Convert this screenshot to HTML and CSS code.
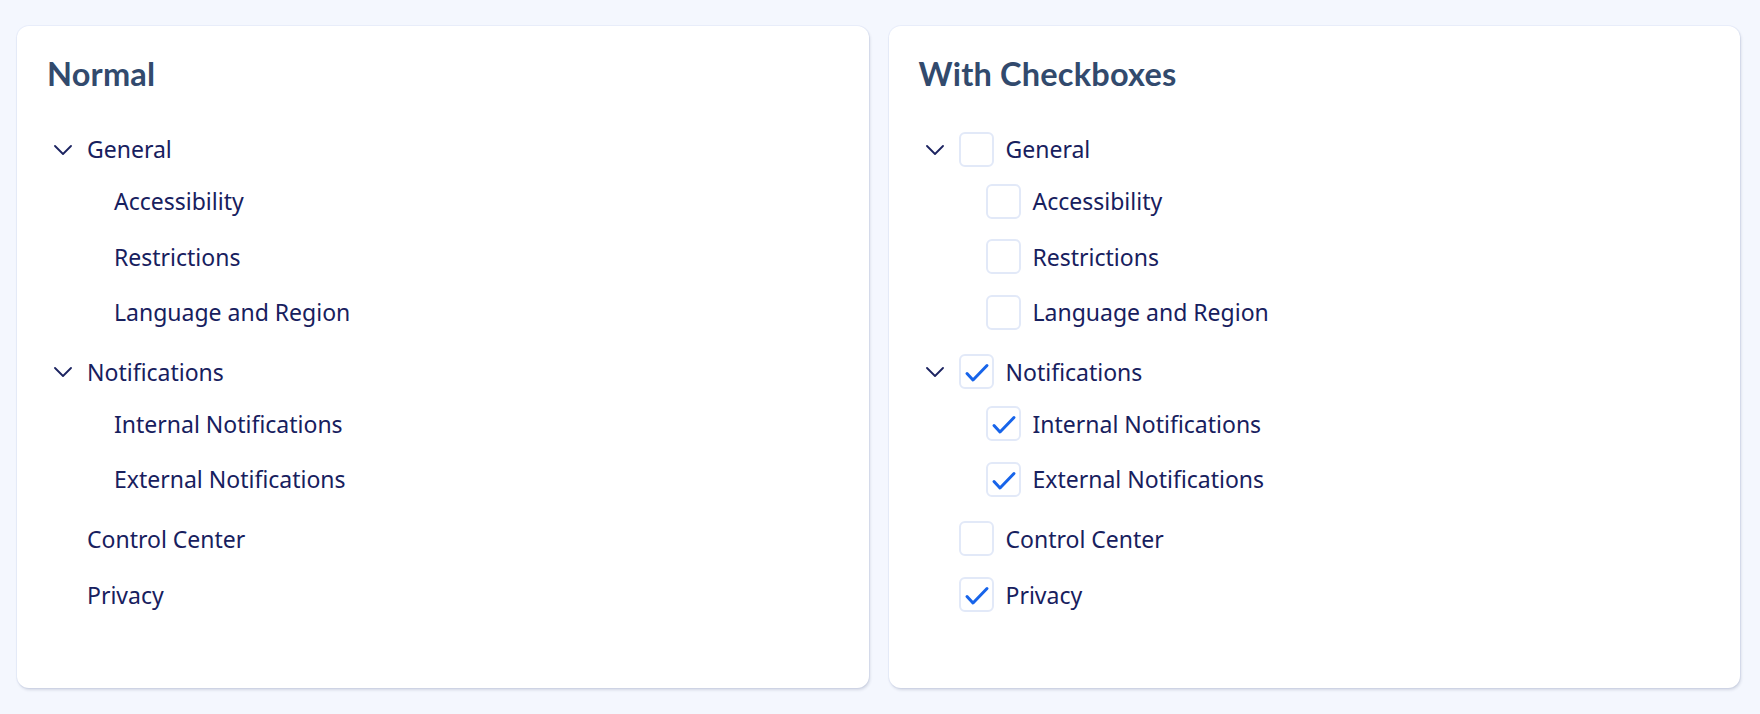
FILE: index.html
```html
<!DOCTYPE html>
<html lang="en">
<head>
<meta charset="utf-8">
<title>Tree</title>
<link rel="stylesheet" href="styles.css">
</head>
<body>
<div class="page">
  <section class="card">
    <h2 class="card-title">Normal</h2>
    <ul class="tree">
      <li class="node">
        <div class="row"><span class="switcher"><svg width="18" height="10" viewBox="0 0 18 10"><path d="M1 1 L9 9 L17 1" fill="none" stroke="#1b2360" stroke-width="1.8" stroke-linecap="round" stroke-linejoin="round"/></svg></span><span class="label">General</span></div>
        <ul class="children">
          <li class="node"><div class="row"><span class="switcher"></span><span class="label">Accessibility</span></div></li>
          <li class="node"><div class="row"><span class="switcher"></span><span class="label">Restrictions</span></div></li>
          <li class="node"><div class="row"><span class="switcher"></span><span class="label">Language and Region</span></div></li>
        </ul>
      </li>
      <li class="node">
        <div class="row"><span class="switcher"><svg width="18" height="10" viewBox="0 0 18 10"><path d="M1 1 L9 9 L17 1" fill="none" stroke="#1b2360" stroke-width="1.8" stroke-linecap="round" stroke-linejoin="round"/></svg></span><span class="label">Notifications</span></div>
        <ul class="children">
          <li class="node"><div class="row"><span class="switcher"></span><span class="label">Internal Notifications</span></div></li>
          <li class="node"><div class="row"><span class="switcher"></span><span class="label">External Notifications</span></div></li>
        </ul>
      </li>
      <li class="node"><div class="row"><span class="switcher"></span><span class="label">Control Center</span></div></li>
      <li class="node"><div class="row"><span class="switcher"></span><span class="label">Privacy</span></div></li>
    </ul>
  </section>
  <section class="card">
    <h2 class="card-title">With Checkboxes</h2>
    <ul class="tree">
      <li class="node">
        <div class="row"><span class="switcher"><svg width="18" height="10" viewBox="0 0 18 10"><path d="M1 1 L9 9 L17 1" fill="none" stroke="#1b2360" stroke-width="1.8" stroke-linecap="round" stroke-linejoin="round"/></svg></span><span class="cb"></span><span class="label">General</span></div>
        <ul class="children">
          <li class="node"><div class="row"><span class="switcher"></span><span class="cb"></span><span class="label">Accessibility</span></div></li>
          <li class="node"><div class="row"><span class="switcher"></span><span class="cb"></span><span class="label">Restrictions</span></div></li>
          <li class="node"><div class="row"><span class="switcher"></span><span class="cb"></span><span class="label">Language and Region</span></div></li>
        </ul>
      </li>
      <li class="node">
        <div class="row"><span class="switcher"><svg width="18" height="10" viewBox="0 0 18 10"><path d="M1 1 L9 9 L17 1" fill="none" stroke="#1b2360" stroke-width="1.8" stroke-linecap="round" stroke-linejoin="round"/></svg></span><span class="cb checked"><svg width="35" height="35" viewBox="0 0 35 35"><path d="M8 19.5 L14 26 L28 11.5" fill="none" stroke="#1764ea" stroke-width="3" stroke-linecap="round" stroke-linejoin="round"/></svg></span><span class="label">Notifications</span></div>
        <ul class="children">
          <li class="node"><div class="row"><span class="switcher"></span><span class="cb checked"><svg width="35" height="35" viewBox="0 0 35 35"><path d="M8 19.5 L14 26 L28 11.5" fill="none" stroke="#1764ea" stroke-width="3" stroke-linecap="round" stroke-linejoin="round"/></svg></span><span class="label">Internal Notifications</span></div></li>
          <li class="node"><div class="row"><span class="switcher"></span><span class="cb checked"><svg width="35" height="35" viewBox="0 0 35 35"><path d="M8 19.5 L14 26 L28 11.5" fill="none" stroke="#1764ea" stroke-width="3" stroke-linecap="round" stroke-linejoin="round"/></svg></span><span class="label">External Notifications</span></div></li>
        </ul>
      </li>
      <li class="node"><div class="row"><span class="switcher"></span><span class="cb"></span><span class="label">Control Center</span></div></li>
      <li class="node"><div class="row"><span class="switcher"></span><span class="cb checked"><svg width="35" height="35" viewBox="0 0 35 35"><path d="M8 19.5 L14 26 L28 11.5" fill="none" stroke="#1764ea" stroke-width="3" stroke-linecap="round" stroke-linejoin="round"/></svg></span><span class="label">Privacy</span></div></li>
    </ul>
  </section>
</div>
</body>
</html>
```

FILE: styles.css
```css
html, body {
  margin: 0;
  padding: 0;
}
body {
  background: #f4f7fe;
  font-family: "Noto Sans", "Open Sans", sans-serif;
}
.page {
  box-sizing: border-box;
  height: 714px;
  padding: 26px 20px 26px 17px;
  display: grid;
  grid-template-columns: 1fr 1fr;
  gap: 20px;
}
.card {
  background: #ffffff;
  border-radius: 12px;
  box-shadow: 1px 2px 3px rgba(40, 52, 90, 0.16), 0 0 0 1px rgba(225, 232, 248, 0.6);
  padding: 28px 30px 24px 30px;
}
.card-title {
  margin: 0;
  font-family: Lato, "Noto Sans", sans-serif;
  font-weight: 700;
  font-size: 32.5px;
  line-height: 40px;
  color: #324a6d;
  letter-spacing: 0.2px;
}
.tree {
  list-style: none;
  margin: 29px 0 0 0;
  padding: 0;
  display: flex;
  flex-direction: column;
  gap: 4px;
}
.children {
  list-style: none;
  margin: 0;
  padding: 0 0 3.5px 27px;
  display: flex;
  flex-direction: column;
  gap: 3.5px;
}
.row {
  height: 52px;
  display: flex;
  align-items: center;
}
.switcher {
  width: 32px;
  margin-right: 8px;
  height: 52px;
  display: flex;
  align-items: center;
  justify-content: center;
  flex: none;
}
.switcher svg {
  display: block;
  margin-top: 1px;
}
.cb {
  box-sizing: border-box;
  width: 35px;
  height: 35px;
  border: 2px solid #e2e9f8;
  border-radius: 6px;
  margin-right: 12px;
  flex: none;
  position: relative;
}
.cb svg {
  position: absolute;
  left: -2px;
  top: -2px;
  display: block;
}
.label {
  font-size: 23px;
  color: #17205e;
  white-space: nowrap;
}
```
